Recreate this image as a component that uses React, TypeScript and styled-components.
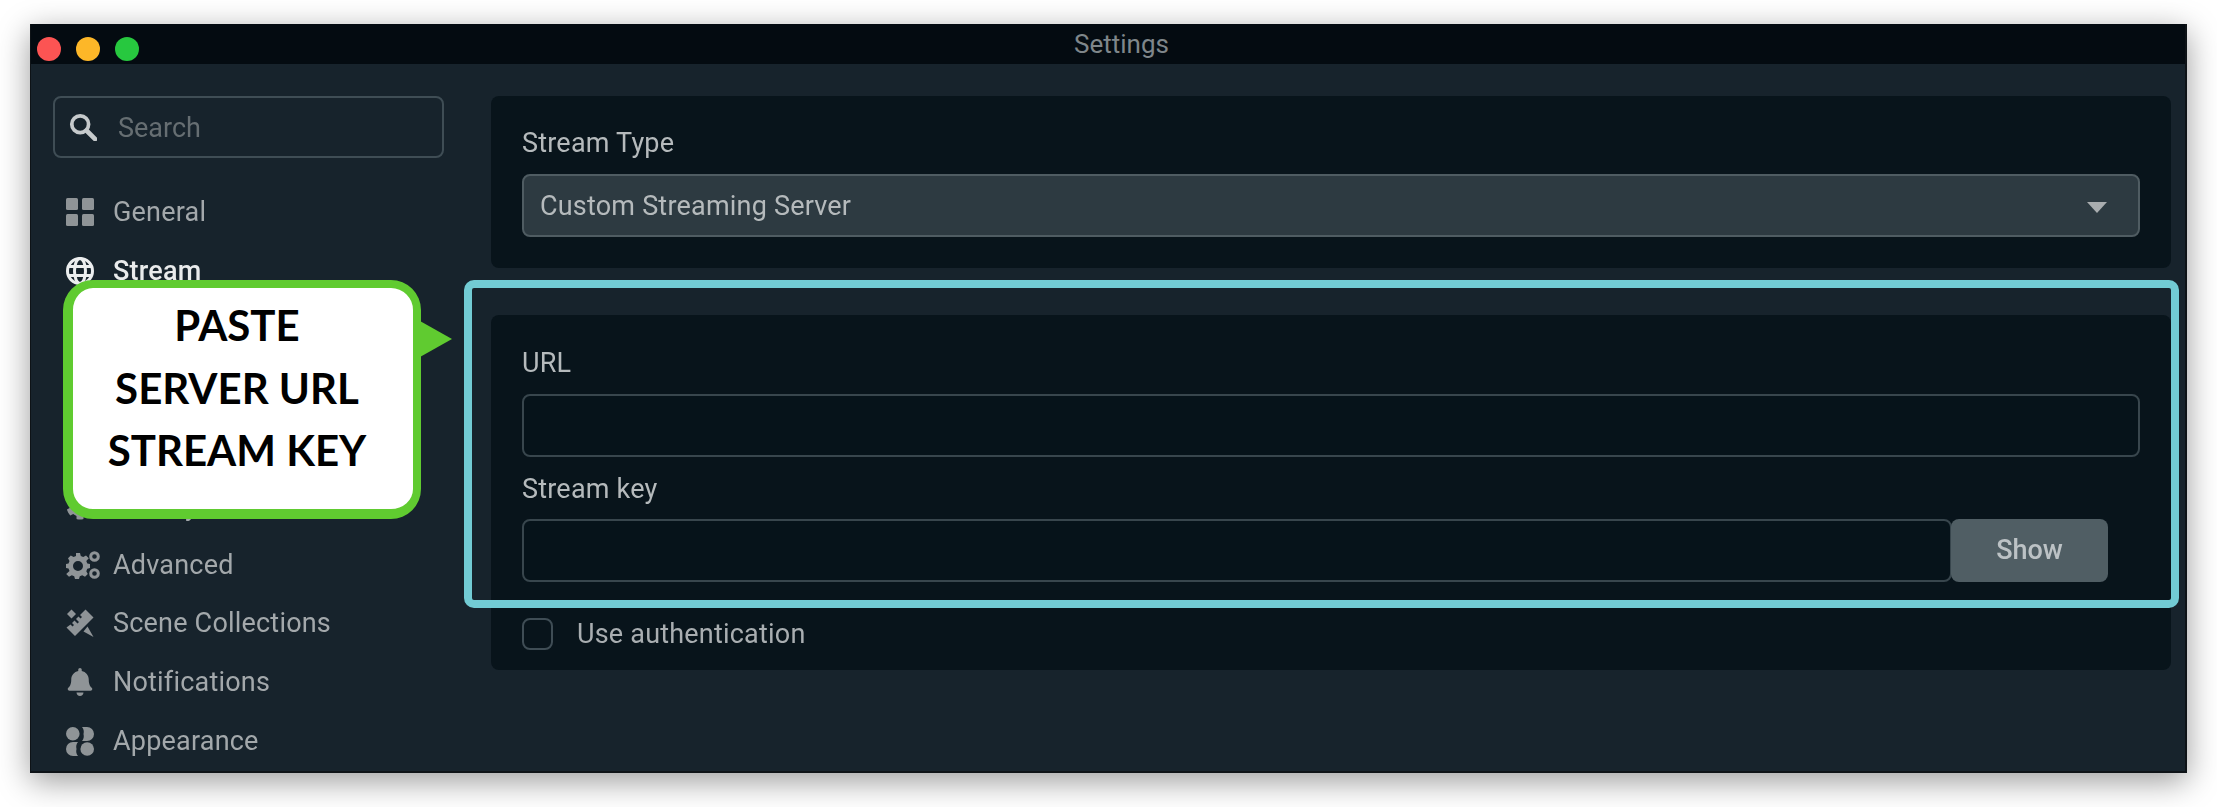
import React from 'react';
import styled, { createGlobalStyle } from 'styled-components';
import { FaBell, FaCog, FaVolumeUp, FaVideo } from 'react-icons/fa';

const GlobalStyle = createGlobalStyle`
  html, body {
    margin: 0;
    padding: 0;
    background: #ffffff;
    font-family: Roboto, "Liberation Sans", sans-serif;
  }
`;

const Stage = styled.div`
  position: relative;
  width: 2217px;
  height: 807px;
  box-sizing: border-box;
  padding: 24px 30px 34px;
  overflow: hidden;
  background: #ffffff;
`;

const Window = styled.div`
  height: 100%;
  box-sizing: border-box;
  border: solid #0e1317;
  border-width: 0 2px 2px 1px;
  background: #17232c;
  box-shadow: 0 8px 30px rgba(0, 0, 0, 0.4);
  overflow: hidden;
`;

const Soft = styled.div`
  height: 100%;
  filter: blur(0.55px);
`;

const TitleBar = styled.div`
  position: relative;
  height: 40px;
  background: #040b11;
  display: flex;
  align-items: center;
  justify-content: center;
`;

const Lights = styled.div`
  position: absolute;
  left: 6px;
  top: 13px;
  display: flex;
  gap: 15px;
`;

const Light = styled.span<{ $color: string }>`
  width: 24px;
  height: 24px;
  border-radius: 50%;
  background: ${(p) => p.$color};
`;

const Title = styled.span`
  font-size: 26px;
  line-height: 40px;
  color: #7f868a;
  margin: -1px 0 0 27px;
`;

const Body = styled.div`
  display: flex;
`;

const Sidebar = styled.aside`
  width: 460px;
  flex: none;
  box-sizing: border-box;
  padding: 32px 0 0 22px;
`;

const SearchBox = styled.div`
  width: 391px;
  height: 62px;
  box-sizing: border-box;
  border: 2px solid #3f4d55;
  border-radius: 8px;
  display: flex;
  align-items: center;
  padding-left: 14px;
  gap: 21px;
`;

const SearchText = styled.span`
  font-size: 27px;
  color: #666e72;
  margin-top: 2px;
`;

const Nav = styled.nav`
  margin-top: 24.5px;
  display: flex;
  flex-direction: column;
`;

const NavItem = styled.div<{ $active?: boolean }>`
  height: 58.8px;
  display: flex;
  align-items: center;
  font-size: 27px;
  letter-spacing: 0.2px;
  padding-left: 13px;
  color: ${(p) => (p.$active ? '#e9ebec' : '#a3a8ab')};
  font-weight: ${(p) => (p.$active ? 500 : 400)};
  svg {
    flex: none;
    color: ${(p) => (p.$active ? '#eceeef' : '#8f9497')};
  }
`;

const IconSlot = styled.span`
  width: 47px;
  flex: none;
  display: flex;
  align-items: center;
`;

const Content = styled.main`
  flex: 1;
  padding: 32px 14px 0 0;
  display: flex;
  flex-direction: column;
  gap: 47px;
`;

const Panel = styled.section<{ $top: number; $bottom: number }>`
  background: #08141b;
  border-radius: 8px;
  padding: ${(p) => p.$top}px 31px ${(p) => p.$bottom}px 31px;
`;

const Label = styled.div<{ $top?: number }>`
  font-size: 27px;
  letter-spacing: 0.2px;
  line-height: 30px;
  color: #b5babc;
  margin-top: ${(p) => p.$top ?? 0}px;
`;

const Select = styled.div`
  margin-top: 16px;
  height: 63px;
  box-sizing: border-box;
  background: #2d3a41;
  border: 2px solid #4f5c62;
  border-radius: 8px;
  display: flex;
  align-items: center;
  justify-content: space-between;
  padding: 0 31px 0 16px;
  font-size: 27px;
  letter-spacing: 0.2px;
  color: #b5babc;
`;

const Caret = styled.span`
  width: 0;
  height: 0;
  margin-top: 4px;
  border-left: 10px solid transparent;
  border-right: 10px solid transparent;
  border-top: 11px solid #a9adaf;
`;

const Input = styled.div<{ $top: number }>`
  margin-top: ${(p) => p.$top}px;
  height: 63px;
  box-sizing: border-box;
  background: #06131a;
  border: 2px solid #38464d;
  border-radius: 8px;
  flex: 1;
`;

const InputRow = styled.div`
  margin-top: 15px;
  display: flex;
  margin-right: 32px;
`;

const ShowButton = styled.div`
  width: 157px;
  height: 63px;
  box-sizing: border-box;
  padding-bottom: 2px;
  margin-left: -1px;
  background: #505e64;
  border-radius: 8px;
  display: flex;
  align-items: center;
  justify-content: center;
  font-size: 27px;
  font-weight: 500;
  color: #bcc2c5;
`;

const CheckRow = styled.div`
  margin-top: 36px;
  display: flex;
  align-items: center;
  gap: 24px;
  font-size: 27px;
  letter-spacing: 0.2px;
  color: #a9aeb1;
`;

const CheckBox = styled.span`
  width: 31px;
  height: 32px;
  box-sizing: border-box;
  border: 2px solid #3f4d55;
  border-radius: 8px;
`;

const Highlight = styled.div`
  position: absolute;
  left: 464px;
  top: 280px;
  width: 1715px;
  height: 328px;
  box-sizing: border-box;
  border: 8px solid #72cbd4;
  border-radius: 10px;
`;

const Callout = styled.div`
  position: absolute;
  left: 63px;
  top: 280px;
  width: 358px;
  height: 239px;
  box-sizing: border-box;
  background: #ffffff;
  border: solid #60cb30;
  border-width: 8px 8px 10px 10px;
  border-radius: 30px;
  padding: 6px 12px 0 0;
  text-align: center;
  font-family: Lato, "Liberation Sans", sans-serif;
  font-weight: 700;
  font-size: 42px;
  line-height: 62.5px;
  color: #000000;
  &::after {
    content: '';
    position: absolute;
    left: 347px;
    top: 33px;
    width: 0;
    height: 0;
    border-top: 18px solid transparent;
    border-bottom: 18px solid transparent;
    border-left: 32px solid #60cb30;
  }
`;

const SearchIcon = () => (
  <svg width="28" height="28" viewBox="0 0 30 30" fill="none" stroke="#c6cacc">
    <circle cx="12" cy="12" r="9" strokeWidth="4" />
    <path d="M19 19l9 9" strokeWidth="5" strokeLinecap="round" />
  </svg>
);

const GridIcon = () => (
  <svg width="28" height="28" viewBox="0 0 28 28" fill="currentColor">
    <rect x="0" y="0" width="12" height="12" rx="1.5" />
    <rect x="16" y="0" width="12" height="12" rx="1.5" />
    <rect x="0" y="16" width="12" height="12" rx="1.5" />
    <rect x="16" y="16" width="12" height="12" rx="1.5" />
  </svg>
);

const GlobeIcon = () => (
  <svg width="28" height="28" viewBox="0 0 28 28" fill="none" stroke="currentColor" strokeWidth="3">
    <circle cx="14" cy="14" r="12.5" />
    <ellipse cx="14" cy="14" rx="5.5" ry="12.5" />
    <path d="M2 9.5h24M2 18.5h24" />
  </svg>
);

const OutputIcon = () => (
  <svg width="28" height="28" viewBox="0 0 28 28" fill="currentColor">
    <path d="M2 4h24v15H2zM10 22h8v3h-8z" />
  </svg>
);

const GearsIcon = () => (
  <svg width="34" height="28" viewBox="0 0 34 28" fill="currentColor">
    <path
      fillRule="evenodd"
      d="M10 2h4l.8 3 2.4 1 2.8-1.5 2.8 2.8L20.300 10l1 2.400 2.700.6v4l-2.700.8-1 2.400 1.500 2.800-2.800 2.800-2.800-1.500-2.400 1-.8 2.700h-4l-.8-2.700-2.400-1-2.800 1.500-2.800-2.800L3.500 20l-1-2.400L0 17v-4l2.500-.6 1-2.400L2 7.300l2.800-2.800 2.800 1.500 2.400-1zM12 10a5 5 0 1 0 0 10 5 5 0 0 0 0-10z"
    />
    <circle cx="28.500" cy="5.500" r="3.800" fill="none" stroke="currentColor" strokeWidth="3" />
    <circle cx="28.500" cy="22.500" r="3.800" fill="none" stroke="currentColor" strokeWidth="3" />
  </svg>
);

const SceneIcon = () => (
  <svg width="28" height="28" viewBox="0 0 28 28" fill="currentColor">
    <path d="M19.500 0.500L27.500 8.500 9 27 0.500 18.500l4-3 2 2 1.500-1.500-2-2 2.500-2.500 3 3 1.500-1.500-3-3 2.500-2.500 2 2 1.500-1.500-2-2z" />
    <path d="M5.500 0.500l4.500 4.500-4.500 4.500L1 5z" />
    <path d="M21.500 17.500l6 10.500-10-5.500z" />
  </svg>
);

const BlobsIcon = () => (
  <svg width="28" height="29" viewBox="0 0 28 29" fill="currentColor">
    <circle cx="6.800" cy="6.800" r="6.800" />
    <path d="M16 0h5a7 7 0 0 1 0 14h-5a8 8 0 0 0 1.500-7A8 8 0 0 0 16 0z" />
    <path d="M12 15H7a7 7 0 0 0 0 14h5a8 8 0 0 1-1.500-7A8 8 0 0 1 12 15z" />
    <circle cx="21.200" cy="22" r="6.800" />
  </svg>
);

const navItems: { label: string; icon: React.ReactNode; active?: boolean }[] = [
  { label: 'General', icon: <GridIcon /> },
  { label: 'Stream', icon: <GlobeIcon />, active: true },
  { label: 'Output', icon: <OutputIcon /> },
  { label: 'Audio', icon: <FaVolumeUp size={26} /> },
  { label: 'Video', icon: <FaVideo size={26} /> },
  { label: 'Hotkeys', icon: <FaCog size={28} /> },
  { label: 'Advanced', icon: <GearsIcon /> },
  { label: 'Scene Collections', icon: <SceneIcon /> },
  { label: 'Notifications', icon: <FaBell size={28} /> },
  { label: 'Appearance', icon: <BlobsIcon /> },
];

const App = () => {
  return (
    <Stage>
      <GlobalStyle />
      <Window>
        <Soft>
          <TitleBar>
            <Lights>
              <Light $color="#fc5453" />
              <Light $color="#fdb728" />
              <Light $color="#27c83f" />
            </Lights>
            <Title>Settings</Title>
          </TitleBar>
          <Body>
            <Sidebar>
              <SearchBox>
                <SearchIcon />
                <SearchText>Search</SearchText>
              </SearchBox>
              <Nav>
                {navItems.map((item) => (
                  <NavItem key={item.label} $active={item.active}>
                    <IconSlot>{item.icon}</IconSlot>
                    {item.label}
                  </NavItem>
                ))}
              </Nav>
            </Sidebar>
            <Content>
              <Panel $top={32} $bottom={31}>
                <Label>Stream Type</Label>
                <Select>
                  Custom Streaming Server
                  <Caret />
                </Select>
              </Panel>
              <Panel $top={33} $bottom={20}>
                <Label>URL</Label>
                <Input $top={16} />
                <Label $top={17}>Stream key</Label>
                <InputRow>
                  <Input $top={0} />
                  <ShowButton>Show</ShowButton>
                </InputRow>
                <CheckRow>
                  <CheckBox />
                  Use authentication
                </CheckRow>
              </Panel>
            </Content>
          </Body>
        </Soft>
      </Window>
      <Highlight />
      <Callout>
        PASTE
        <br />
        SERVER URL
        <br />
        STREAM KEY
      </Callout>
    </Stage>
  );
};

export default App;
